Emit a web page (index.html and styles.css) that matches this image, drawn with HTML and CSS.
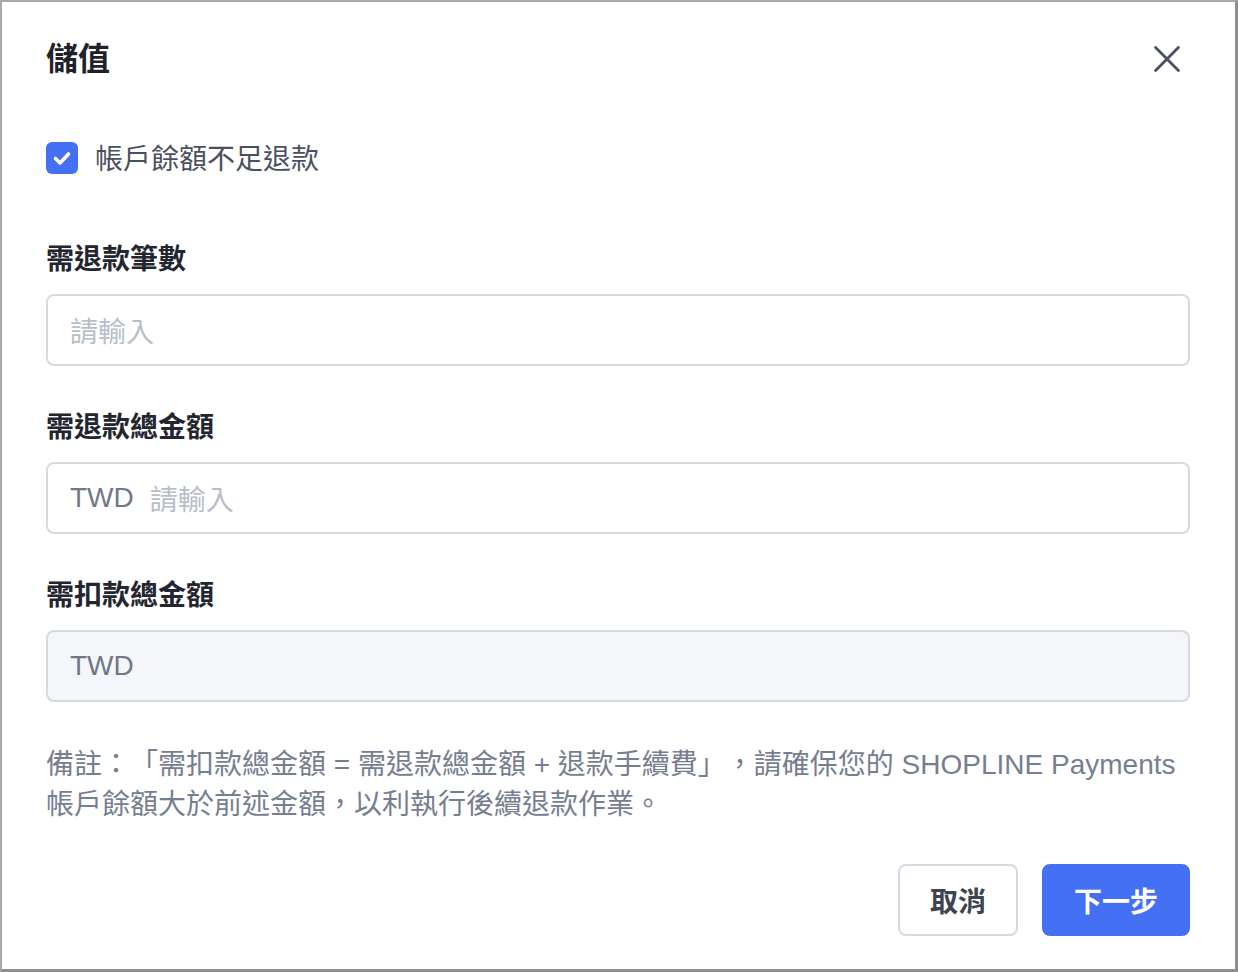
FILE: index.html
```html
<!DOCTYPE html>
<html lang="zh-Hant">
<head>
<meta charset="utf-8">
<title>儲值</title>
<link rel="stylesheet" href="styles.css">
</head>
<body>
<div class="modal">
  <div class="modal-header">
    <h1 class="modal-title">儲值</h1>
    <button class="close-btn" aria-label="close">
      <svg width="26" height="26" viewBox="0 0 26 26"><path d="M1.6 1.6 L24.4 24.4 M24.4 1.6 L1.6 24.4" stroke="#4b5060" stroke-width="2.8" stroke-linecap="round" fill="none"/></svg>
    </button>
  </div>

  <label class="check-row">
    <span class="checkbox">
      <svg width="32" height="32" viewBox="0 0 32 32"><path d="M9.5 16.5 L14 21 L22.5 12" stroke="#fff" stroke-width="3.6" stroke-linecap="round" stroke-linejoin="round" fill="none"/></svg>
    </span>
    <span class="check-text">帳戶餘額不足退款</span>
  </label>

  <div class="field first">
    <div class="field-label">需退款筆數</div>
    <div class="input"><span class="placeholder">請輸入</span></div>
  </div>

  <div class="field">
    <div class="field-label">需退款總金額</div>
    <div class="input"><span class="prefix">TWD</span><span class="placeholder">請輸入</span></div>
  </div>

  <div class="field">
    <div class="field-label">需扣款總金額</div>
    <div class="input disabled"><span class="prefix">TWD</span></div>
  </div>

  <p class="note">備註：「需扣款總金額 = 需退款總金額 + 退款手續費」，請確保您的 SHOPLINE Payments 帳戶餘額大於前述金額，以利執行後續退款作業。</p>

  <div class="footer">
    <button class="btn btn-default">取消</button>
    <button class="btn btn-primary">下一步</button>
  </div>
</div>
</body>
</html>
```

FILE: styles.css
```css
* { box-sizing: border-box; }
html, body { margin: 0; padding: 0; background: #fff; }
body {
  font-family: "Liberation Sans", "Noto Sans CJK TC", sans-serif;
  width: 1238px;
  height: 972px;
  overflow: hidden;
  text-spacing-trim: space-all;
}
.modal {
  width: 1238px;
  height: 972px;
  border-top: 2px solid #a9a9a9;
  border-left: 2px solid #a9a9a9;
  border-right: 3px solid #8f8f8f;
  border-bottom: 3px solid #8f8f8f;
  padding: 0 45px 0 44px;
  display: flex;
  flex-direction: column;
  background: #fff;
}
.modal-header {
  margin-top: 35px;
  height: 44px;
  display: flex;
  align-items: center;
  justify-content: space-between;
}
.modal-title {
  margin: 0;
  font-size: 32px;
  line-height: 44px;
  font-weight: 700;
  color: #1f2229;
}
.close-btn {
  border: 0;
  background: none;
  padding: 0;
  margin-right: 10px;
  width: 26px;
  height: 26px;
  display: flex;
}
.check-row {
  margin-top: 61px;
  height: 32px;
  display: flex;
  align-items: center;
}
.checkbox {
  width: 32px;
  height: 32px;
  border-radius: 6px;
  background: #4470f4;
  display: flex;
}
.check-text {
  margin-left: 17px;
  font-size: 28px;
  line-height: 36px;
  padding-top: 4px;
  color: #4a505e;
}
.field { margin-top: 40px; }
.field.first { margin-top: 64px; }
.field-label {
  font-size: 28px;
  line-height: 36px;
  padding-top: 4px;
  font-weight: 700;
  color: #23262e;
  margin-bottom: 16px;
}
.input {
  height: 72px;
  border: 2px solid #d6dae3;
  border-radius: 8px;
  padding: 0 22px;
  display: flex;
  align-items: center;
  font-size: 28px;
  background: #fff;
}
.input.disabled { background: #f5f6fa; }
.placeholder { color: #b8bec9; }
.prefix { color: #6f788a; margin-right: 16px; }
.note {
  margin: 42px 0 0;
  font-size: 28px;
  line-height: 40px;
  padding-top: 1px;
  color: #767e91;
}
.footer {
  margin-top: 39px;
  display: flex;
  justify-content: flex-end;
  gap: 24px;
}
.btn {
  height: 72px;
  padding: 0 30px;
  border: 2px solid #d6dae3;
  border-radius: 8px;
  font-family: "Liberation Sans", "Noto Sans CJK TC", sans-serif;
  font-size: 28px;
  font-weight: 700;
  background: #fff;
  color: #3e4350;
}
.btn-primary {
  background: #4470f4;
  border-color: #4470f4;
  color: #fff;
}
```
